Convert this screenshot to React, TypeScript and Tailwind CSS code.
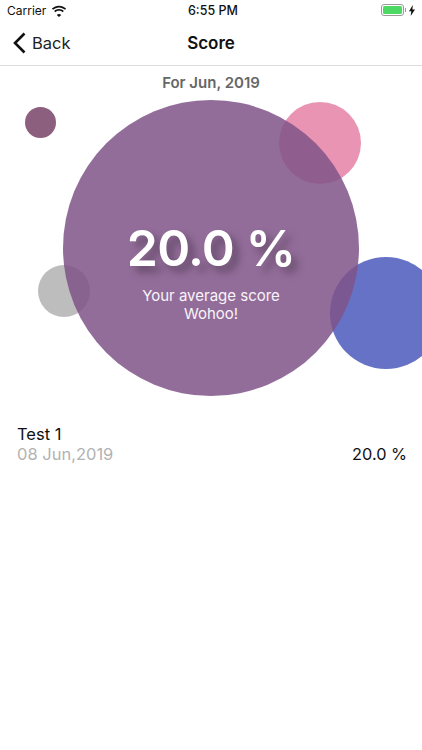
import React from "react";

function Circle({ className }: { className: string }) {
  return <div className={`absolute rounded-full ${className}`} />;
}

export default function App() {
  return (
    <div className="w-[422px] h-[750px] bg-white overflow-hidden font-['Inter','Liberation_Sans',sans-serif] flex flex-col">
      <div className="h-[20px] relative shrink-0 text-[12px] text-[#111]">
        <div className="absolute left-[7px] top-[2px] flex items-center gap-[5px]">
          <span className="leading-[18px]">Carrier</span>
          <svg width="16" height="12" viewBox="0 0 16 12" fill="#111">
            <path d="M8 2.4c2.3 0 4.4.9 6 2.4l1.1-1.2C13.200 1.800 10.700.7 8 .7S2.800 1.800.9 3.600L2 4.800c1.600-1.500 3.700-2.400 6-2.400zM8 5.800c1.400 0 2.600.5 3.600 1.400l1.200-1.200C11.500 4.800 9.800 4.100 8 4.100s-3.500.7-4.800 1.900l1.200 1.200c1-.9 2.200-1.400 3.600-1.400zM8 9.100c-.8 0-1.600.3-2.200.8L8 12l2.200-2.100c-.6-.5-1.400-.8-2.200-.8z" />
          </svg>
        </div>
        <div className="absolute left-[188px] top-[2px] leading-[18px] font-medium text-[12.500px]">6:55 PM</div>
        <div className="absolute left-[381px] top-[4px] flex items-center">
          <div className="w-[23px] h-[12px] rounded-[3px] border border-[#9a9a9a] p-[1px]">
            <div className="w-full h-full rounded-[1.500px] bg-[#4cd964]" />
          </div>
          <div className="w-[1px] h-[4px] bg-[#9a9a9a] ml-[1px]" />
          <svg width="6" height="11" viewBox="0 0 6 11" fill="#111" className="ml-[3px]">
            <path d="M3.800 0 0 6.200h2.300L1.700 11 6 4.400H3.400z" />
          </svg>
        </div>
      </div>

      <div className="h-[46px] shrink-0 relative border-b border-[#dcdcdc] flex items-center justify-center">
        <div className="absolute left-[13px] top-[12px] flex items-center gap-[6px]">
          <svg width="13" height="22" viewBox="0 0 13 22" fill="none" stroke="#111" strokeWidth="2.600">
            <path d="M11.500 1.500 2 11l9.500 9.500" />
          </svg>
          <span className="text-[16.500px] text-[#222] leading-[22px]">Back</span>
        </div>
        <span className="text-[17px] font-semibold text-[#111] mt-[3px]">Score</span>
      </div>

      <div className="relative h-[340px] shrink-0">
        <div className="text-center text-[15px] font-semibold text-[#666] mt-[7px] leading-[20px]">For Jun, 2019</div>
        <Circle className="left-[25px] top-[41px] w-[31px] h-[31px] bg-[#8c5f7f]" />
        <Circle className="left-[279px] top-[36px] w-[82px] h-[82px] bg-[#e994b3]" />
        <Circle className="left-[38px] top-[199px] w-[52px] h-[52px] bg-[#bdbdbd]" />
        <Circle className="left-[330px] top-[191px] w-[112px] h-[112px] bg-[#6572c6]" />
        <div className="absolute left-[63px] top-[34px] w-[296px] h-[296px] rounded-full bg-[rgba(128,84,136,0.85)] flex flex-col items-center text-white">
          <div className="mt-[118px] text-[50px] font-semibold tracking-[-0.8px] leading-[60px] [text-shadow:6px_6px_8px_rgba(0,0,0,0.35)]">20.0 %</div>
          <div className="mt-[9px] text-[15px] leading-[18px] text-center text-[#f8f4f9]">
            Your average score
            <br />
            Wohoo!
          </div>
        </div>
      </div>

      <div className="flex items-end justify-between pl-[17px] pr-[15px] mt-[18px]">
        <div>
          <div className="text-[16.500px] leading-[20px] text-[#111]">Test 1</div>
          <div className="text-[16.500px] leading-[20px] text-[#b3b3b3]">08 Jun,2019</div>
        </div>
        <div className="text-[16.300px] leading-[20px] text-[#111]">20.0 %</div>
      </div>
    </div>
  );
}
